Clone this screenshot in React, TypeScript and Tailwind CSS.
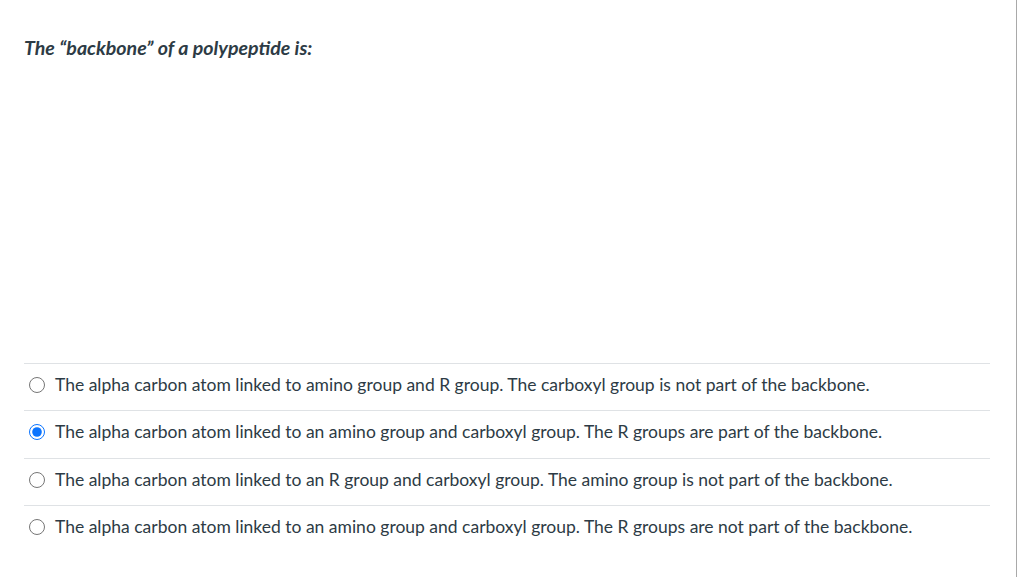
const options = [
  "The alpha carbon atom linked to amino group and R group. The carboxyl group is not part of the backbone.",
  "The alpha carbon atom linked to an amino group and carboxyl group. The R groups are part of the backbone.",
  "The alpha carbon atom linked to an R group and carboxyl group. The amino group is not part of the backbone.",
  "The alpha carbon atom linked to an amino group and carboxyl group. The R groups are not part of the backbone.",
];

const selected = 1;

export default function App() {
  return (
    <div
      className="flex h-[577px] w-[1017px] bg-white text-[#2d3b45]"
      style={{ fontFamily: "Lato, 'Liberation Sans', sans-serif" }}
    >
      <div className="flex flex-1 flex-col pl-6 pr-[26px] pt-[36px]">
        <p className="text-[19.6px] font-bold italic leading-[24px]">
          The “backbone” of a polypeptide is:
        </p>
        <div className="mt-[303px]">
          {options.map((text, i) => (
            <label
              key={i}
              className="flex h-[47.3px] items-center gap-[10px] border-t border-[#dfe2e5] pb-[4px] pl-[5px] text-[17.5px]"
            >
              <input
                type="radio"
                name="answer"
                defaultChecked={i === selected}
                className="m-0 h-[16px] w-[16px] accent-[#0b74ff]"
              />
              <span>{text}</span>
            </label>
          ))}
        </div>
      </div>
      <div className="w-px bg-[#a9a9a9]" />
    </div>
  );
}
